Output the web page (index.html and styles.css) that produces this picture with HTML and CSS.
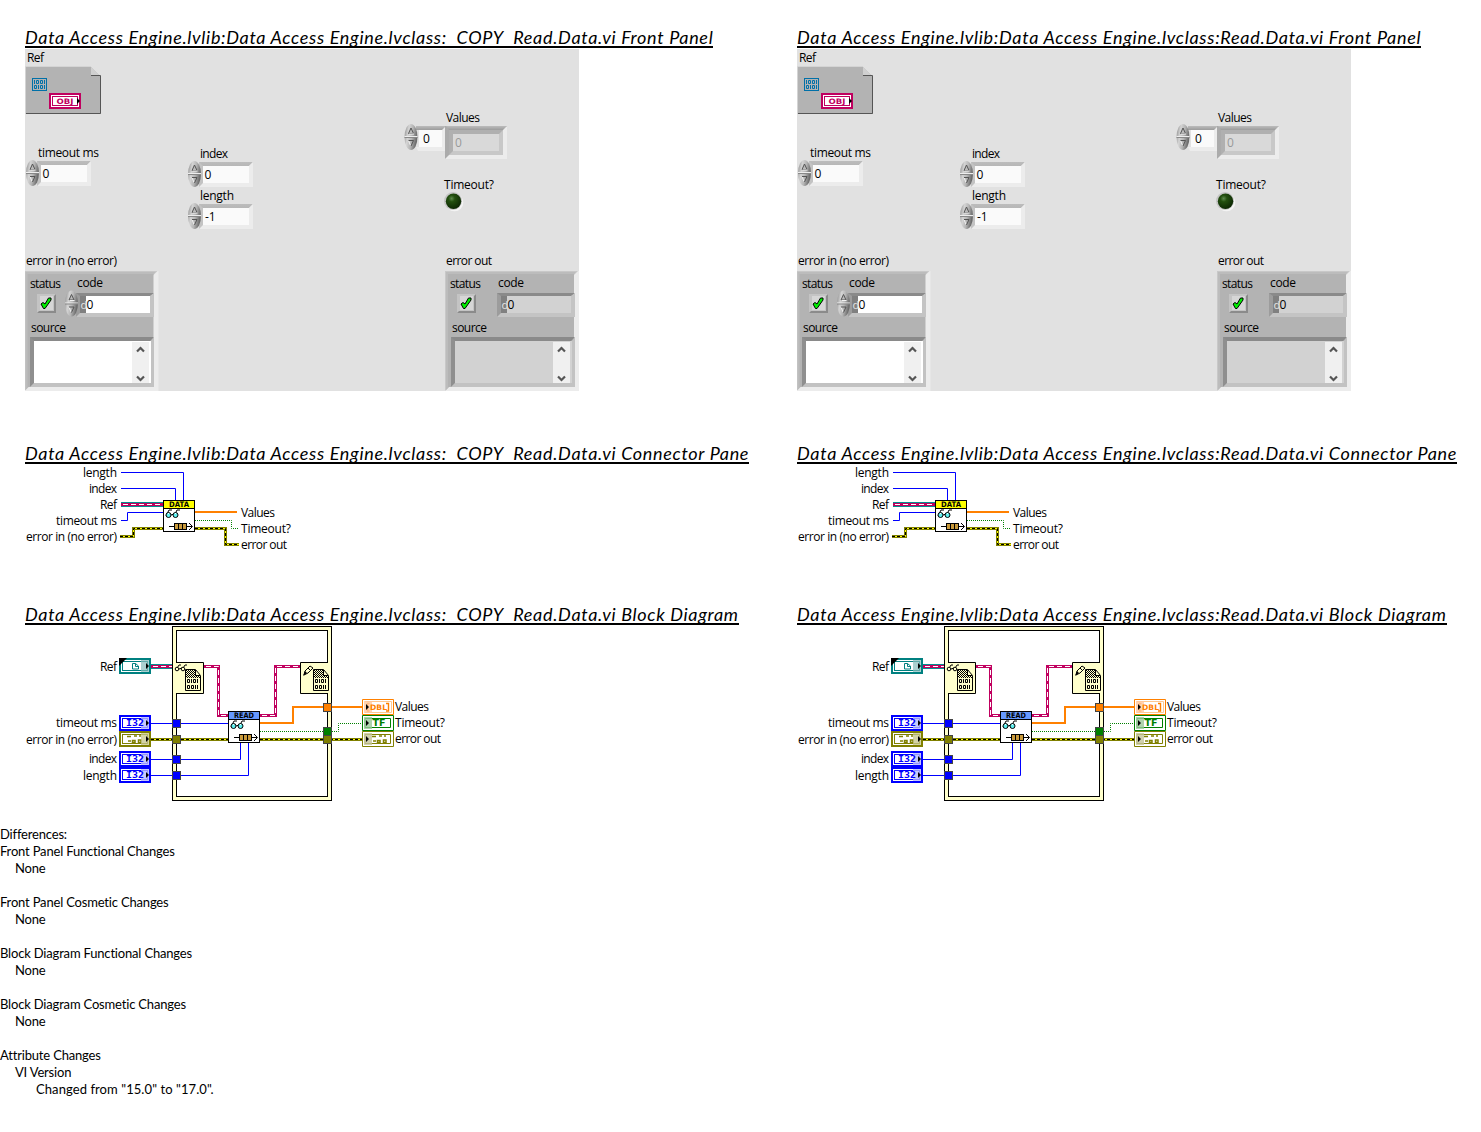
FILE: index.html
```html
<!DOCTYPE html>
<html lang="en">
<head>
<meta charset="utf-8">
<title>VI comparison report</title>
<link rel="stylesheet" href="styles.css">
</head>
<body>
<svg class="library" width="0" height="0" aria-hidden="true">
  <defs>
    <linearGradient id="metal" x1="0" x2="1" y1="0" y2="0.3">
      <stop offset="0" stop-color="#858585"/><stop offset=".35" stop-color="#d4d4d4"/><stop offset=".65" stop-color="#b5b5b5"/><stop offset="1" stop-color="#6c6c6c"/>
    </linearGradient>
    <linearGradient id="shade" x1="0" x2="0" y1="0" y2="1">
      <stop offset="0" stop-color="#bcbcbc"/><stop offset="1" stop-color="#9c9c9c"/>
    </linearGradient>
    <radialGradient id="led" cx=".38" cy=".32" r=".7">
      <stop offset="0" stop-color="#5d8a4c"/><stop offset=".3" stop-color="#23500f"/><stop offset="1" stop-color="#0c2703"/>
    </radialGradient>
    <pattern id="dither" width="2" height="2" patternUnits="userSpaceOnUse">
      <rect width="2" height="2" fill="#ffffcc"/><path d="M0 0h1v1h-1zM1 1h1v1h-1z"/>
    </pattern>

    <g id="spinner">
      <ellipse cx="6.5" cy="13" rx="6.5" ry="13" fill="url(#metal)"/>
      <path d="M0 12.5H13" stroke="#eee"/><path d="M0 13.5H13" stroke="#888"/>
      <path d="M4 9.5L6.5 4L9 9.5Z" fill="#bbb" stroke="#555"/><path d="M4.500 10H9.500M4 16.500L6 21.500" stroke="#f2f2f2"/>
      <path d="M4 16.5H9L6.5 22" fill="none" stroke="#555"/>
    </g>
    <g id="numeric">
      <path d="M0 0H54L50 4H4V21L0 25Z" fill="url(#shade)"/>
      <path d="M0 0V25L4 21V4Z" fill="#c3c3c3"/>
      <path d="M54 0V25H0L4 21H50V4Z" fill="#ececec"/>
      <rect x="4" y="4" width="46" height="17" fill="#fafafa"/>
    </g>
    <g id="check">
      <rect width="19" height="19" fill="#c4c4c4"/><path d="M19 0V19H0L2 17H17V2Z" fill="#8b8b8b"/>
      <rect x="3" y="2" width="13" height="14" fill="#d6d6d6"/>
      <path d="M4 10L6 8.500L8 10L11.500 4H14V6L8 14.500H6.500Z" fill="#00f000" stroke="#000" stroke-linejoin="round"/>
    </g>
    <g id="code-well">
      <path d="M0 0H78L74 3H4V20L0 24Z" fill="#8a8a8a"/><path d="M0 0L4 3V20L0 24Z" fill="#9c9c9c"/>
      <path d="M78 0V24H0L4 20H74V3Z" fill="#c4c4c4"/>
      <rect x="4" y="3" width="6" height="17" fill="#808080"/>
    </g>
    <g id="source-well">
      <path d="M0 0H124L120 4H4V46L0 50Z" fill="#8a8a8a"/><path d="M0 0L4 4V46L0 50Z" fill="#8f8f8f"/>
      <path d="M124 0V50H0L4 46H121V4Z" fill="#c2c2c2"/>
    </g>
    <g id="scroll">
      <rect width="17" height="41" fill="#f0f0f0"/>
      <path d="M5 9.5L8.500 6L12 9.500M5 34.500L8.500 38L12 34.500" fill="none" stroke="#555" stroke-width="2.200"/>
    </g>
    <g id="cluster">
      <rect width="134" height="120" fill="#ececec"/><path d="M0 0H133L129 4L4 116L0 120Z" fill="#c8c8c8"/>
      <path d="M1 1H131L128 4L4 116L1 119Z" fill="#bcbcbc"/>
      <rect x="3" y="3" width="126" height="113" fill="#b3b3b3"/>
    </g>

    <g id="panel-art">
      <rect x="25" y="49" width="554" height="342" fill="#e1e1e1"/>
      <path d="M26 67H91L101 77V114H26Z" fill="#b3b3b3"/>
      <path d="M25.500 114V66.500H91" fill="none" stroke="#d4d4d4"/>
      <path d="M91 67L100 76H91Z" fill="#d0d0d0"/><path d="M91 75.500H100.500V113.500H26" fill="none" stroke="#555"/>
      <g fill="none" stroke="#0070a8"><rect x="32.500" y="78.500" width="14" height="12"/>
        <path d="M34.500 80V84M44.500 80V84M36.500 80.500H38.500V83.500H36.500ZM40.500 80.500H42.500V83.500H40.500Z"/>
        <path d="M38.500 85V89M44.500 85V89M34.500 85.500H36.500V88.500H34.500ZM40.500 85.500H42.500V88.500H40.500Z"/></g>
      <rect x="50" y="94" width="30" height="14" fill="#fff" stroke="#c0005f" stroke-width="2"/>
      <rect x="52.500" y="96.500" width="25" height="9" fill="#fff" stroke="#c0005f"/>
      <path d="M77 98L80 101L77 104Z"/>
      <use href="#numeric" x="37" y="161"/><use href="#spinner" x="26" y="160"/>
      <use href="#numeric" x="199" y="162"/><use href="#spinner" x="188" y="161"/>
      <use href="#numeric" x="199" y="204"/><use href="#spinner" x="188" y="203"/>

      <path d="M416 126H445V130H416Z" fill="url(#shade)"/><path d="M416 147H445V151H418Z" fill="#ececec"/><path d="M442 130L445 127V150H442Z" fill="#ececec"/>
      <rect x="419" y="130" width="23" height="17" fill="#fafafa"/><use href="#spinner" x="404.500" y="124"/>
      <rect x="445" y="126" width="62" height="33" fill="#ececec"/><path d="M445 126H507L449 155L445 159Z" fill="#ababab"/><path d="M446 126H507L503 130H449Z" fill="url(#shade)"/>
      <rect x="449" y="130" width="54" height="25" fill="#c8c8c8"/><path d="M449 130H503L499 134H453V151L449 155Z" fill="#b0b0b0"/>
      <rect x="453" y="134" width="46" height="17" fill="#d9d9d9"/>
      <circle cx="454.500" cy="202.500" r="8.800" fill="#f4f4f4"/><circle cx="453" cy="201" r="9" fill="#c4c4c4"/><circle cx="453.500" cy="201.300" r="7.700" fill="url(#led)"/>

      <use href="#cluster" x="24.500" y="271"/>
      <use href="#check" x="37" y="294"/><use href="#code-well" x="76" y="293"/><rect x="86" y="296" width="64" height="17" fill="#fff"/><use href="#spinner" x="65" y="290.500"/>
      <use href="#source-well" x="30" y="337"/><rect x="34" y="341" width="117" height="42" fill="#fff"/><use href="#scroll" x="132" y="342"/>
      <use href="#cluster" x="445" y="271"/>
      <use href="#check" x="457" y="294"/><use href="#code-well" x="497" y="293"/><rect x="507" y="296" width="64" height="17" fill="#d2d2d2"/>
      <use href="#source-well" x="451" y="337"/><rect x="455" y="341" width="117" height="42" fill="#d2d2d2"/><use href="#scroll" x="553" y="342"/>
    </g>

    <g id="glasses">
      <path d="M1 7L4 1L7 1M9 7L12 1L15 1M6 6L9 5" fill="none" stroke="#000"/>
      <circle cx="3.500" cy="6" r="2.500" fill="#5ff0f0" stroke="#000"/><circle cx="10.500" cy="6" r="2.500" fill="#5ff0f0" stroke="#000"/>
      <path d="M3 4h1v1H3zM10 4h1v1h-1z" fill="#fff"/>
    </g>
    <g id="vi-body">
      <rect x=".5" y=".5" width="31" height="31" fill="#fff" stroke="#000"/>
      <use href="#glasses" x="2" y="9"/>
      <path d="M6 26.500H29M26 23L29.500 26.500L26 30" fill="none" stroke="#000"/>
      <rect x="11.500" y="23.500" width="12" height="6" fill="#c99a3c" stroke="#000"/><path d="M15.500 23V30M19.500 23V30" stroke="#000"/>
    </g>

    <g id="connector-art" fill="none">
      <path d="M121 472.500H183.500V500M121 488.500H175.500V500M121 520.500H127.500V512.500H163" class="int"/>
      <path d="M121 504.500H163" class="teal"/><path d="M121 504.500H163" class="pink"/><path d="M121 504.500H163" class="pink-gap"/>
      <path d="M120 536.500H133.500V528.500H163M195 528.500H225.500V544.500H239" class="error"/>
      <path d="M120 536.500H133.500V528.500H163M195 528.500H225.500V544.500H239" class="error-yellow"/>
      <path d="M120 536.500H133.500V528.500H163M195 528.500H225.500V544.500H239" class="error-dash"/>
      <path d="M195 512H237" class="double"/><path d="M195 520.500H231.500V528.500H239" class="bool"/>
      <use href="#vi-body" x="163" y="500"/><rect x="163.500" y="500.500" width="31" height="8" fill="#ff0" stroke="#000"/>
    </g>

    <g id="int-terminal">
      <rect x="1" y="1" width="30" height="14" fill="#fff" stroke="#00f" stroke-width="2"/><rect x="3.500" y="3.500" width="25" height="9" fill="#fff" stroke="#00f"/>
      <rect x="22" y="2" width="8" height="12" fill="#b8b8ff" opacity=".8"/><path d="M27 5L30 8L27 11Z"/>
    </g>
    <g id="tunnel"><rect x=".5" y=".5" width="8" height="8" stroke="#444"/></g>
    <g id="file">
      <path d="M.5 .5H10.500L15.500 6.500V21.500H.5Z" fill="#ffffcc" stroke="#000"/><path d="M1 1H10V6H15V9H1Z" fill="url(#dither)"/><path d="M10.500 1V6.500H15" fill="none" stroke="#000"/>
      <path d="M2.500 10.500H4.500V13.500H2.500ZM6.500 10V14M8.500 10.500H10.500V13.500H8.500ZM12.500 10V14M2.500 16.500H4.500V19.500H2.500ZM6.500 16.500H8.500V19.500H6.500ZM10.500 16V20M12.500 16V20" fill="none" stroke="#000"/>
    </g>
    <g id="cluster-glyph" fill="none" stroke="#808000" stroke-width="1.500">
      <path d="M0 1.500H4M7 1H10M12 1H14M1 6H4M5.500 5.500H8V7.500H5.500ZM11.500 5H14V7.500H11.500Z"/>
    </g>

    <g id="diagram-art">
      <rect x="172.500" y="626.500" width="159" height="174" fill="#ffffcc" stroke="#000"/><rect x="176.500" y="630.500" width="151" height="166" fill="#fff" stroke="#000"/>
      <g fill="none">
        <path d="M151 666.500H172" class="teal"/><path d="M151 666.500H172M204 666.500H218.500V715.500H228M260 715.500H275.500V666.500H300" class="pink"/>
        <path d="M151 666.500H172M204 666.500H218.500V715.500H228M260 715.500H275.500V666.500H300" class="pink-gap"/>
        <path d="M151 723.500H228M151 759.500H240.500V743M151 775.500H248.500V743" class="int"/>
        <path d="M151 739.500H228M260 739.500H362" class="error"/><path d="M151 739.500H228M260 739.500H362" class="error-yellow"/><path d="M151 739.500H228M260 739.500H362" class="error-dash"/>
        <path d="M260 723H293V707H362" class="double"/><path d="M260 731.500H338.500V723.500H362" class="bool"/>
      </g>
      <path d="M173 662H204V694H173Z" fill="#ffffcc"/><path d="M176 662.500H203.500V693.500H176" fill="none" stroke="#000"/>
      <path d="M300 662H331V694H300Z" fill="#ffffcc"/><path d="M328 662.500H300.500V693.500H328" fill="none" stroke="#000"/>
      <path d="M176 670L179 665H181M182 670L185 665H187M179 669L182 668" fill="none" stroke="#000"/><circle cx="177" cy="669" r="1.800" fill="#ffffcc" stroke="#000"/><circle cx="183" cy="669" r="1.800" fill="#ffffcc" stroke="#000"/>
      <use href="#file" x="185" y="669"/><use href="#file" x="313" y="669"/>
      <path d="M304 675L305 671L310 666L313 668L308 673ZM308 668L311 671" fill="#ffffcc" stroke="#000"/><path d="M303 676L305 671L307 673Z"/>

      <rect x="120" y="659" width="30" height="14" fill="#fff" stroke="#008080" stroke-width="2"/><rect x="122.500" y="661.500" width="25" height="9" fill="#fff" stroke="#008080"/>
      <rect x="141" y="660" width="8" height="12" fill="#88bcbc" opacity=".7"/><path d="M146 663L149 666L146 669ZM119 658H127L119 666Z"/>
      <path d="M132.500 663.500H135.500L138.500 666V669H132.500ZM135.500 663.500V666.500H138.500" fill="none" stroke="#008080"/>
      <use href="#int-terminal" x="119" y="715"/><use href="#int-terminal" x="119" y="751"/><use href="#int-terminal" x="119" y="767"/>
      <rect x="120" y="732" width="30" height="14" fill="#fff" stroke="#808000" stroke-width="2"/><rect x="122.500" y="734.500" width="25" height="9" fill="#fff" stroke="#808000"/>
      <use href="#cluster-glyph" x="127" y="735"/><rect x="141" y="733" width="8" height="12" fill="#c4c488" opacity=".75"/><path d="M146 736L149 739L146 742Z"/>
      <use href="#tunnel" x="172" y="719" fill="#00f"/><use href="#tunnel" x="172" y="735" fill="#808000"/><use href="#tunnel" x="172" y="755" fill="#00f"/><use href="#tunnel" x="172" y="771" fill="#00f"/>
      <use href="#tunnel" x="323" y="703" fill="#ff8000"/><use href="#tunnel" x="323" y="727" fill="#008000"/><use href="#tunnel" x="323" y="735" fill="#808000"/>
      <use href="#vi-body" x="228" y="711"/><rect x="228.500" y="711.500" width="31" height="8" fill="#69f" stroke="#000"/>
      <g fill="#fff">
        <path d="M362.500 699.500H393.500V714.500H362.500Z" stroke="#ff8000"/><path d="M365 701.500H391.500V712.500H365" stroke="#ffc890"/>
        <path d="M362.500 715.500H393.500V730.500H362.500ZM365 718.500H390.500V727.500H365Z" stroke="#008000"/>
        <path d="M362.500 731.500H393.500V746.500H362.500ZM365 734.500H390.500V743.500H365Z" stroke="#808000"/>
      </g>
      <path d="M369.500 703.500H367.500V711H369.500M386 703.500H388.500V711H386" fill="none" stroke="#ff8000" stroke-width="1.400"/>
      <use href="#cluster-glyph" x="372" y="735"/>
      <path d="M364 701H372V713H364Z" fill="#ffc8a0" opacity=".8"/><path d="M364 717H372V729H364Z" fill="#98c898" opacity=".8"/><path d="M364 733H372V745H364Z" fill="#c4c498" opacity=".8"/>
      <path d="M366 704L369 707L366 710ZM366 720L369 723L366 726ZM366 736L369 739L366 742Z"/>
    </g>
  </defs>
</svg>

<main class="comparison">
  <article class="vi first">
    <h2 class="title">Data Access Engine.lvlib:Data Access Engine.lvclass:  COPY  Read.Data.vi Front Panel</h2>
    <svg class="panel" width="554" height="342" viewBox="25 49 554 342">
      <use href="#panel-art"/>
      <text x="27" y="62" textLength="17">Ref</text><text class="tiny obj" x="56.500" y="104" textLength="17" lengthAdjust="spacingAndGlyphs">OBJ</text>
      <text x="38" y="157" textLength="61">timeout ms</text><text x="42.500" y="178">0</text>
      <text x="200" y="158" textLength="28">index</text><text x="204.500" y="179">0</text>
      <text x="200" y="200" textLength="34">length</text><text x="205" y="221">-1</text>
      <text x="446" y="122" textLength="34">Values</text><text x="423" y="143">0</text><text class="dim" x="455" y="147">0</text>
      <text x="444" y="189" textLength="50">Timeout?</text>
      <text x="26" y="265" textLength="91">error in (no error)</text><text x="30" y="288" textLength="31">status</text><text x="77" y="287" textLength="26">code</text><text class="radix" x="80.500" y="309">d</text><text x="86.500" y="309">0</text><text x="31" y="332" textLength="35">source</text>
      <text x="446" y="265" textLength="46">error out</text><text x="450" y="288" textLength="31">status</text><text x="498" y="287" textLength="26">code</text><text class="radix" x="501.500" y="309">d</text><text x="507.500" y="309">0</text><text x="452" y="332" textLength="35">source</text>
    </svg>
    <h2 class="title">Data Access Engine.lvlib:Data Access Engine.lvclass:  COPY  Read.Data.vi Connector Pane</h2>
    <svg class="connector" width="280" height="88" viewBox="25 465 280 88">
      <use href="#connector-art"/>
      <text x="83" y="477" textLength="34">length</text><text x="89" y="493" textLength="28">index</text><text x="100" y="509" textLength="17">Ref</text><text x="56" y="525" textLength="61">timeout ms</text><text x="26" y="541" textLength="91">error in (no error)</text>
      <text x="241" y="517" textLength="34">Values</text><text x="241" y="533" textLength="50">Timeout?</text><text x="241" y="549" textLength="46">error out</text>
      <text class="tiny" x="169" y="507" textLength="20" lengthAdjust="spacingAndGlyphs">DATA</text>
    </svg>
    <h2 class="title">Data Access Engine.lvlib:Data Access Engine.lvclass:  COPY  Read.Data.vi Block Diagram</h2>
    <svg class="diagram" width="430" height="176" viewBox="25 626 430 176">
      <use href="#diagram-art"/>
      <text x="100" y="671" textLength="17">Ref</text><text x="56" y="727" textLength="61">timeout ms</text><text x="26" y="744" textLength="91">error in (no error)</text><text x="89" y="763" textLength="28">index</text><text x="83" y="780" textLength="34">length</text>
      <text x="395" y="711" textLength="34">Values</text><text x="395" y="727" textLength="50">Timeout?</text><text x="395" y="743" textLength="46">error out</text>
      <text class="tiny int-text" x="126" y="726" textLength="18" lengthAdjust="spacingAndGlyphs">I32</text><text class="tiny int-text" x="126" y="762" textLength="18" lengthAdjust="spacingAndGlyphs">I32</text><text class="tiny int-text" x="126" y="778" textLength="18" lengthAdjust="spacingAndGlyphs">I32</text>
      <text class="tiny" x="234" y="718" textLength="20" lengthAdjust="spacingAndGlyphs">READ</text><text class="tiny dbl-text" x="370" y="710" textLength="17" lengthAdjust="spacingAndGlyphs">DBL</text><text class="tiny tf-text" x="372.500" y="726" textLength="13" lengthAdjust="spacingAndGlyphs">TF</text>
    </svg>
  </article>

  <article class="vi second">
    <h2 class="title">Data Access Engine.lvlib:Data Access Engine.lvclass:Read.Data.vi Front Panel</h2>
    <svg class="panel" width="554" height="342" viewBox="25 49 554 342">
      <use href="#panel-art"/>
      <text x="27" y="62" textLength="17">Ref</text><text class="tiny obj" x="56.500" y="104" textLength="17" lengthAdjust="spacingAndGlyphs">OBJ</text>
      <text x="38" y="157" textLength="61">timeout ms</text><text x="42.500" y="178">0</text>
      <text x="200" y="158" textLength="28">index</text><text x="204.500" y="179">0</text>
      <text x="200" y="200" textLength="34">length</text><text x="205" y="221">-1</text>
      <text x="446" y="122" textLength="34">Values</text><text x="423" y="143">0</text><text class="dim" x="455" y="147">0</text>
      <text x="444" y="189" textLength="50">Timeout?</text>
      <text x="26" y="265" textLength="91">error in (no error)</text><text x="30" y="288" textLength="31">status</text><text x="77" y="287" textLength="26">code</text><text class="radix" x="80.500" y="309">d</text><text x="86.500" y="309">0</text><text x="31" y="332" textLength="35">source</text>
      <text x="446" y="265" textLength="46">error out</text><text x="450" y="288" textLength="31">status</text><text x="498" y="287" textLength="26">code</text><text class="radix" x="501.500" y="309">d</text><text x="507.500" y="309">0</text><text x="452" y="332" textLength="35">source</text>
    </svg>
    <h2 class="title">Data Access Engine.lvlib:Data Access Engine.lvclass:Read.Data.vi Connector Pane</h2>
    <svg class="connector" width="280" height="88" viewBox="25 465 280 88">
      <use href="#connector-art"/>
      <text x="83" y="477" textLength="34">length</text><text x="89" y="493" textLength="28">index</text><text x="100" y="509" textLength="17">Ref</text><text x="56" y="525" textLength="61">timeout ms</text><text x="26" y="541" textLength="91">error in (no error)</text>
      <text x="241" y="517" textLength="34">Values</text><text x="241" y="533" textLength="50">Timeout?</text><text x="241" y="549" textLength="46">error out</text>
      <text class="tiny" x="169" y="507" textLength="20" lengthAdjust="spacingAndGlyphs">DATA</text>
    </svg>
    <h2 class="title">Data Access Engine.lvlib:Data Access Engine.lvclass:Read.Data.vi Block Diagram</h2>
    <svg class="diagram" width="430" height="176" viewBox="25 626 430 176">
      <use href="#diagram-art"/>
      <text x="100" y="671" textLength="17">Ref</text><text x="56" y="727" textLength="61">timeout ms</text><text x="26" y="744" textLength="91">error in (no error)</text><text x="89" y="763" textLength="28">index</text><text x="83" y="780" textLength="34">length</text>
      <text x="395" y="711" textLength="34">Values</text><text x="395" y="727" textLength="50">Timeout?</text><text x="395" y="743" textLength="46">error out</text>
      <text class="tiny int-text" x="126" y="726" textLength="18" lengthAdjust="spacingAndGlyphs">I32</text><text class="tiny int-text" x="126" y="762" textLength="18" lengthAdjust="spacingAndGlyphs">I32</text><text class="tiny int-text" x="126" y="778" textLength="18" lengthAdjust="spacingAndGlyphs">I32</text>
      <text class="tiny" x="234" y="718" textLength="20" lengthAdjust="spacingAndGlyphs">READ</text><text class="tiny dbl-text" x="370" y="710" textLength="17" lengthAdjust="spacingAndGlyphs">DBL</text><text class="tiny tf-text" x="372.500" y="726" textLength="13" lengthAdjust="spacingAndGlyphs">TF</text>
    </svg>
  </article>
</main>

<section class="differences">
  <p>Differences:</p>
  <div class="group"><p>Front Panel Functional Changes</p><p class="item">None</p></div>
  <div class="group"><p>Front Panel Cosmetic Changes</p><p class="item">None</p></div>
  <div class="group"><p>Block Diagram Functional Changes</p><p class="item">None</p></div>
  <div class="group"><p>Block Diagram Cosmetic Changes</p><p class="item">None</p></div>
  <div class="group"><p>Attribute Changes</p><p class="item">VI Version</p><p class="detail">Changed from "15.0" to "17.0".</p></div>
</section>
</body>
</html>
```
FILE: styles.css
```css
body {
  margin: 0;
  background: #fff;
  color: #000;
  font-family: Lato, sans-serif;
  font-variant-ligatures: none;
}

.library {
  display: block;
}

.comparison {
  display: grid;
  grid-template-columns: 772px 1fr;
  padding: 25px 0 0 25px;
}

.vi {
  display: flex;
  flex-direction: column;
  align-items: flex-start;
}

.title {
  margin: 0 0 1px;
  height: 21px;
  overflow: hidden;
  border-bottom: 2px solid #000;
  font-size: 18px;
  font-weight: 400;
  font-style: italic;
  line-height: 24px;
  letter-spacing: 0.68px;
  white-space: pre;
}

.second .title {
  letter-spacing: 0.71px;
}

.vi svg {
  display: block;
}

.panel {
  margin-bottom: 50px;
}

.connector {
  margin-bottom: 49px;
}

text {
  font-family: "Open Sans", "Noto Sans", sans-serif;
  font-size: 12px;
}

.dim {
  fill: #999;
}

.radix {
  fill: #e4e4e4;
  font-size: 11px;
}

.tiny {
  font-family: "DejaVu Sans", sans-serif;
  font-size: 7.5px;
  font-weight: 700;
}

.obj { fill: #c0005f; }
.int-text {
  fill: #00f;
  font-family: "DejaVu Sans Mono", monospace;
  font-size: 9px;
}
.dbl-text { fill: #ff8000; }
.tf-text {
  fill: #008000;
  font-size: 8px;
}

.int { stroke: #00f; }
.teal { stroke: #009090; stroke-width: 5; }
.pink { stroke: #c0005f; stroke-width: 3; }
.pink-gap { stroke: #fff; stroke-dasharray: 5 3; stroke-dashoffset: -2; }
.error { stroke: #808000; stroke-width: 3; }
.error-yellow { stroke: #ff0; }
.error-dash { stroke: #000; stroke-dasharray: 3 2; }
.double { stroke: #ff8000; stroke-width: 2; }
.bool { stroke: #008000; stroke-dasharray: 1 1; }

.differences {
  padding-top: 24px;
  font-size: 13px;
  line-height: 17px;
  letter-spacing: -0.18px;
}

.differences p {
  margin: 0;
}

.group + .group {
  margin-top: 17px;
}

.differences .item {
  padding-left: 15px;
}

.differences .detail {
  padding-left: 36px;
  letter-spacing: 0.08px;
}
```
